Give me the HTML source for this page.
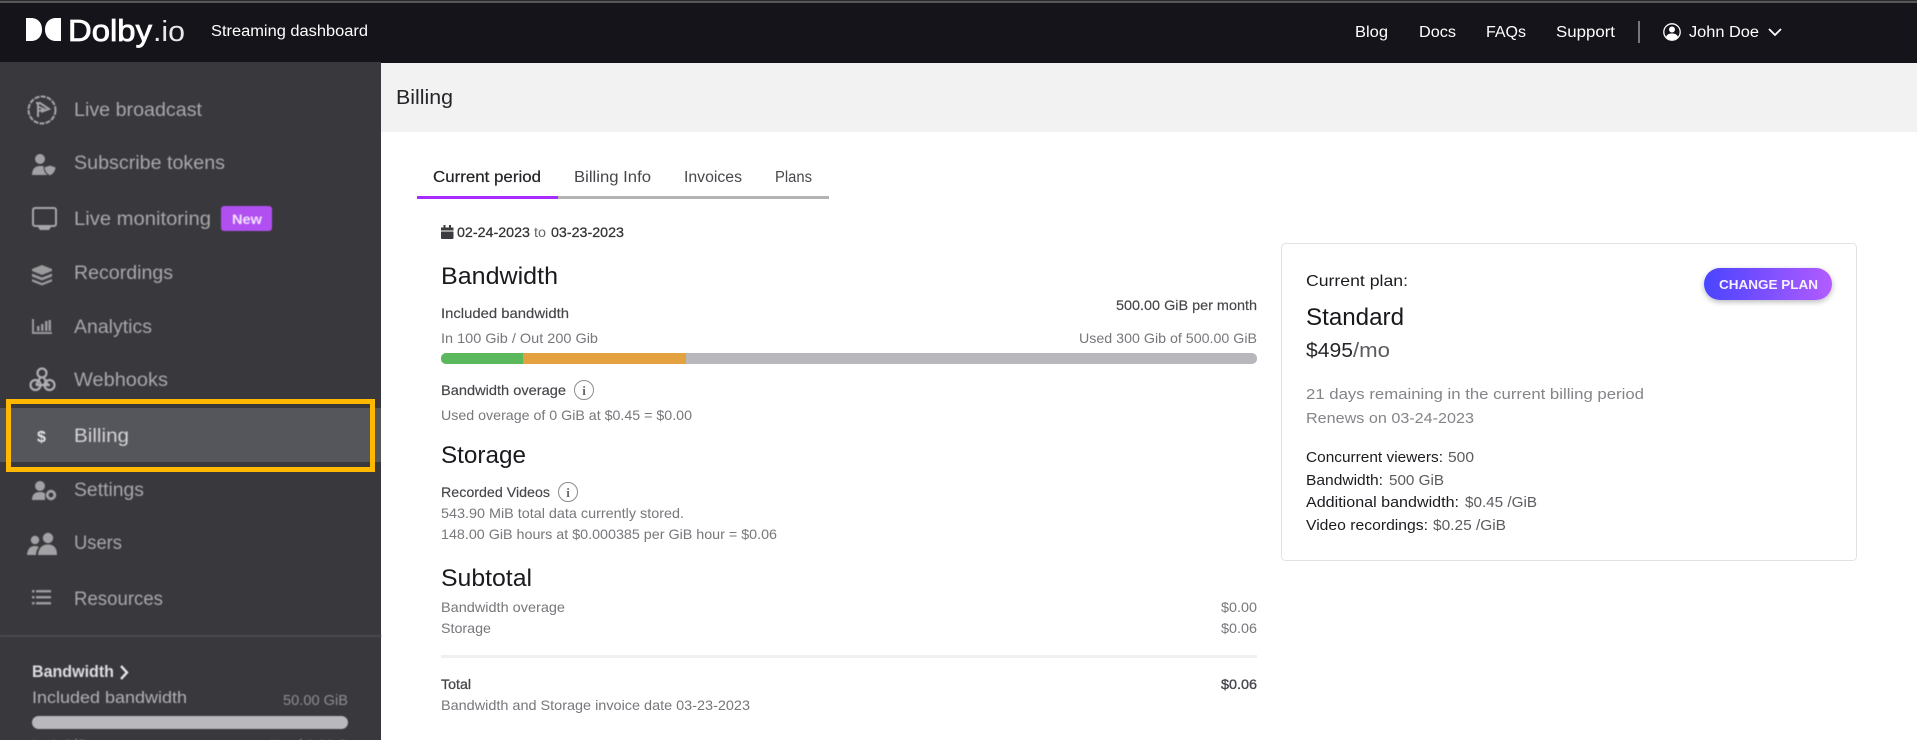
<!DOCTYPE html>
<html lang="en">
<head>
<meta charset="utf-8">
<title>Billing</title>
<style>
html,body{margin:0;padding:0;background:#fff;width:1917px;height:740px;overflow:hidden}
svg{display:block;font-family:"Liberation Sans",sans-serif}
.side text{fill:#a9a9ac;font-size:19px}
.blur{filter:blur(.45px)}
.hd{fill:#fff;font-size:15.5px}
.g{fill:#77777c;font-size:14px}
.m{fill:#45454a;font-size:14px;stroke:#45454a;stroke-width:.15}
.h{fill:#1a1a1e;font-size:24px}
.c{fill:#1c1c20;font-size:15px}
.cg{fill:#5c5c60;font-size:15px}
</style>
</head>
<body>
<svg xmlns="http://www.w3.org/2000/svg" width="1917" height="740" viewBox="0 0 1917 740">
<defs>
<linearGradient id="btn" x1="0" y1="0" x2="1" y2="0"><stop offset="0" stop-color="#4a44ff"/><stop offset="1" stop-color="#b25cff"/></linearGradient>
<filter id="sh" x="-20%" y="-40%" width="140%" height="200%"><feDropShadow dx="0" dy="2" stdDeviation="3" flood-color="#000" flood-opacity=".28"/></filter>
</defs>
<rect width="1917" height="740" fill="#fff"/>
<!-- header -->
<rect width="1917" height="63" fill="#14141a"/>
<rect width="1917" height="3" y="0" fill="#57575a"/>
<rect width="1917" height="1" y="0" fill="#2a2a2c"/>
<path d="M26 18h5c7 0 11 5 11 11.5S38 41 31 41h-5z" fill="#fff"/>
<path d="M61 18h-5c-7 0-11 5-11 11.5S49 41 56 41h5z" fill="#fff"/>
<text x="68" y="41" font-size="31" fill="#fff" stroke="#fff" stroke-width=".8" textLength="84" lengthAdjust="spacingAndGlyphs">Dolby</text>
<text x="153" y="41" font-size="29" fill="#e8e8e8" textLength="32" lengthAdjust="spacingAndGlyphs">.io</text>
<text class="hd" x="211" y="36" textLength="157" lengthAdjust="spacingAndGlyphs">Streaming dashboard</text>
<text class="hd" x="1355" y="37" textLength="33" lengthAdjust="spacingAndGlyphs">Blog</text>
<text class="hd" x="1419" y="37" textLength="37" lengthAdjust="spacingAndGlyphs">Docs</text>
<text class="hd" x="1486" y="37" textLength="40" lengthAdjust="spacingAndGlyphs">FAQs</text>
<text class="hd" x="1556" y="37" textLength="59" lengthAdjust="spacingAndGlyphs">Support</text>
<rect x="1638" y="21" width="2" height="22" fill="#77777a"/>
<circle cx="1672" cy="32" r="8.2" fill="none" stroke="#fff" stroke-width="1.3"/>
<circle cx="1672" cy="29.5" r="3" fill="#fff"/>
<path d="M1666 37c1-3 3.500-3.500 6-3.500s5 .5 6 3.500c-1.500 1.800-3.500 2.600-6 2.600s-4.500-.8-6-2.600z" fill="#fff"/>
<text class="hd" x="1689" y="37" textLength="70" lengthAdjust="spacingAndGlyphs">John Doe</text>
<path d="M1769 29l6 6 6-6" fill="none" stroke="#fff" stroke-width="1.800"/>

<!-- sidebar -->
<rect y="62" width="381" height="678" fill="#38383d"/>
<rect y="408" width="381" height="54" fill="#55565b"/>
<g class="side blur">
<text x="74" y="116" textLength="128" lengthAdjust="spacingAndGlyphs">Live broadcast</text>
<text x="74" y="169" textLength="151" lengthAdjust="spacingAndGlyphs">Subscribe tokens</text>
<text x="74" y="225" textLength="137" lengthAdjust="spacingAndGlyphs">Live monitoring</text>
<text x="74" y="279" textLength="99" lengthAdjust="spacingAndGlyphs">Recordings</text>
<text x="74" y="333" textLength="78" lengthAdjust="spacingAndGlyphs">Analytics</text>
<text x="74" y="386" textLength="94" lengthAdjust="spacingAndGlyphs">Webhooks</text>
<text x="74" y="442" textLength="55" lengthAdjust="spacingAndGlyphs" style="fill:#d4d4d6">Billing</text>
<text x="74" y="496" textLength="70" lengthAdjust="spacingAndGlyphs">Settings</text>
<text x="74" y="549" textLength="48" lengthAdjust="spacingAndGlyphs">Users</text>
<text x="74" y="605" textLength="89" lengthAdjust="spacingAndGlyphs">Resources</text>

<rect x="221" y="206" width="51" height="25" rx="3" fill="#b14ff0"/>
<text x="232" y="224" textLength="30" lengthAdjust="spacingAndGlyphs" style="fill:#f4e4ff;font-size:14px;font-weight:bold">New</text>

<!-- icons -->
<g fill="none" stroke="#a8a8ab">
<circle cx="42" cy="110" r="13.500" stroke-width="2" stroke-dasharray="5 1.200"/>
<path d="M38 102v15M36 103h4l9 6-8 3" stroke-width="2"/>
<path d="M39 107l5 2-5 2" stroke-width="1.500"/>
</g>
<g fill="#a2a2a5">
<circle cx="40" cy="159" r="5"/>
<path d="M32 175c0-6 3-9 8-9s6 1 7 2v7z"/>
<path d="M50 165l6 2c0 4-2 7-6 9-4-2-6-5-6-9z" stroke="#38383d" stroke-width="1"/>
</g>
<g>
<rect x="33" y="208" width="23" height="18" rx="2" fill="none" stroke="#a8a8ab" stroke-width="2"/>
<path d="M38 227h13l-2 3h-9z" fill="#a8a8ab"/>
</g>
<g fill="#9a9a9d">
<path d="M42 265l10 4v2l-10 4-10-4v-2z"/>
<path d="M32 273.500l10 4 10-4v3l-10 4-10-4z"/>
<path d="M32 279l10 4 10-4v2.500l-10 4-10-4z"/>
</g>
<g fill="#9a9a9d">
<path d="M32 319h2v13h18v2H32z"/>
<rect x="37" y="326" width="2.500" height="5"/><rect x="41" y="324" width="2.500" height="7"/><rect x="45" y="321" width="2.500" height="10"/><rect x="48.500" y="320" width="2.500" height="11"/>
</g>
<g fill="none" stroke="#b0b0b3" stroke-width="2.200">
<circle cx="42" cy="373" r="4.500"/>
<circle cx="35.500" cy="385" r="5"/>
<circle cx="49.500" cy="385" r="5"/>
<path d="M40 378l-4 7M44 378l4 7M36 385h14"/>
</g>
<text x="41.500" y="442" text-anchor="middle" style="fill:#e4e4e6;font-size:16px;font-weight:bold">$</text>
<g fill="#a2a2a5">
<circle cx="40" cy="486" r="5"/>
<path d="M32 500c0-6 3-8 8-8 2.500 0 4 .5 5 1.500V500z"/>
<circle cx="51" cy="495" r="3.800" fill="#38383d" stroke="#a2a2a5" stroke-width="2.800"/>
</g>
<g fill="#a2a2a5">
<circle cx="35" cy="540" r="4.200"/>
<circle cx="48" cy="538" r="5.200"/>
<path d="M27 555c.5-6 3-9 8-9 1.500 0 3 .4 4 1-2 2-3 5-3 8z"/>
<path d="M38 555c.5-7 4-10.500 10-10.500S57 548 57 555z"/>
</g>
<g fill="#9a9a9d">
<rect x="32" y="590" width="2.500" height="2.500"/><rect x="36" y="590" width="15" height="2.500"/>
<rect x="32" y="596" width="2.500" height="2.500"/><rect x="36" y="596" width="15" height="2.500"/>
<rect x="32" y="602" width="2.500" height="2.500"/><rect x="36" y="602" width="15" height="2.500"/>
</g>

<rect y="635" width="381" height="2" fill="#4b4b50"/>
<text x="32" y="677" textLength="82" lengthAdjust="spacingAndGlyphs" style="fill:#dedee0;font-size:17px;font-weight:bold">Bandwidth</text>
<path d="M121 666l6 6.500-6 6.500" fill="none" stroke="#e4e4e6" stroke-width="2.400"/>
<text x="32" y="703" textLength="155" lengthAdjust="spacingAndGlyphs" style="fill:#b2b2b5;font-size:16.500px">Included bandwidth</text>
<text x="283" y="705" textLength="65" lengthAdjust="spacingAndGlyphs" style="fill:#8e8e92;font-size:14.500px">50.00 GiB</text>
<rect x="32" y="716" width="316" height="13" rx="6.500" fill="#b8b8bd"/>
<text x="32" y="750" textLength="56" lengthAdjust="spacingAndGlyphs" style="fill:#a2a2a5;font-size:15px">In 0 GiB</text>
<text x="270" y="750" textLength="78" lengthAdjust="spacingAndGlyphs" style="fill:#a2a2a5;font-size:15px">Used 0.00 G</text>
</g>
<rect x="8.500" y="401.500" width="364" height="68" fill="none" stroke="#ffb800" stroke-width="5"/>

<!-- title band -->
<rect x="381" y="63" width="1536" height="69" fill="#f2f2f2"/>
<text x="396" y="104" font-size="20" fill="#26262a" textLength="57" lengthAdjust="spacingAndGlyphs">Billing</text>

<!-- tabs -->
<text x="433" y="182" font-size="16" fill="#232327" stroke="#232327" stroke-width=".2" textLength="108" lengthAdjust="spacingAndGlyphs">Current period</text>
<text x="574" y="182" font-size="15.500" fill="#47474c" textLength="77" lengthAdjust="spacingAndGlyphs">Billing Info</text>
<text x="684" y="182" font-size="15.500" fill="#47474c" textLength="58" lengthAdjust="spacingAndGlyphs">Invoices</text>
<text x="775" y="182" font-size="15.500" fill="#47474c" textLength="37" lengthAdjust="spacingAndGlyphs">Plans</text>
<rect x="558" y="196" width="271" height="3" fill="#b3b3b3"/>
<rect x="417" y="196" width="141" height="3" fill="#a92cff"/>

<!-- date -->
<path d="M441 227.500h12.500v3H441zM441 231.500h12.500V238a1 1 0 0 1-1 1H442a1 1 0 0 1-1-1z" fill="#3c3c40"/>
<rect x="443.500" y="225" width="2" height="3" fill="#3c3c40"/><rect x="449" y="225" width="2" height="3" fill="#3c3c40"/>
<text x="457" y="237" font-size="14" fill="#333" stroke="#333" stroke-width=".25" textLength="73" lengthAdjust="spacingAndGlyphs">02-24-2023</text>
<text x="534" y="237" font-size="14" fill="#666" textLength="12" lengthAdjust="spacingAndGlyphs">to</text>
<text x="551" y="237" font-size="14" fill="#333" stroke="#333" stroke-width=".25" textLength="73" lengthAdjust="spacingAndGlyphs">03-23-2023</text>

<!-- bandwidth -->
<text class="h" x="441" y="284" textLength="117" lengthAdjust="spacingAndGlyphs">Bandwidth</text>
<text class="m" x="441" y="318" textLength="128" lengthAdjust="spacingAndGlyphs">Included bandwidth</text>
<text class="m" x="1116" y="310" textLength="141" lengthAdjust="spacingAndGlyphs">500.00 GiB per month</text>
<text class="g" x="441" y="343" textLength="157" lengthAdjust="spacingAndGlyphs">In 100 Gib / Out 200 Gib</text>
<text class="g" x="1079" y="343" textLength="178" lengthAdjust="spacingAndGlyphs">Used 300 Gib of 500.00 GiB</text>
<rect x="441" y="353" width="816" height="11" rx="5" fill="#b8b7bc"/>
<path d="M446 353h77v11h-77a5 5 0 0 1-5-5v-1a5 5 0 0 1 5-5z" fill="#5cb85c"/>
<rect x="523" y="353" width="163" height="11" fill="#e4a13f"/>
<text class="m" x="441" y="395" textLength="125" lengthAdjust="spacingAndGlyphs">Bandwidth overage</text>
<circle cx="584" cy="390" r="9.500" fill="none" stroke="#8c8c8c" stroke-width="1"/>
<text x="584" y="395" text-anchor="middle" font-size="13" font-family="Liberation Serif" font-weight="bold" fill="#6a6a6a">i</text>
<text class="g" x="441" y="420" textLength="251" lengthAdjust="spacingAndGlyphs">Used overage of 0 GiB at $0.45 = $0.00</text>

<!-- storage -->
<text class="h" x="441" y="463" textLength="85" lengthAdjust="spacingAndGlyphs">Storage</text>
<text class="m" x="441" y="497" textLength="109" lengthAdjust="spacingAndGlyphs">Recorded Videos</text>
<circle cx="568" cy="492" r="9.500" fill="none" stroke="#8c8c8c" stroke-width="1"/>
<text x="568" y="497" text-anchor="middle" font-size="13" font-family="Liberation Serif" font-weight="bold" fill="#6a6a6a">i</text>
<text class="g" x="441" y="518" textLength="243" lengthAdjust="spacingAndGlyphs">543.90 MiB total data currently stored.</text>
<text class="g" x="441" y="539" textLength="336" lengthAdjust="spacingAndGlyphs">148.00 GiB hours at $0.000385 per GiB hour = $0.06</text>

<!-- subtotal -->
<text class="h" x="441" y="586" textLength="91" lengthAdjust="spacingAndGlyphs">Subtotal</text>
<text class="g" x="441" y="612" textLength="124" lengthAdjust="spacingAndGlyphs">Bandwidth overage</text>
<text class="g" x="441" y="633" textLength="50" lengthAdjust="spacingAndGlyphs">Storage</text>
<text class="g" x="1221" y="612" textLength="36" lengthAdjust="spacingAndGlyphs">$0.00</text>
<text class="g" x="1221" y="633" textLength="36" lengthAdjust="spacingAndGlyphs">$0.06</text>
<rect x="441" y="655" width="816" height="3" fill="#f0f0f0"/>
<text class="m" x="441" y="689" textLength="30" lengthAdjust="spacingAndGlyphs" style="stroke-width:.3">Total</text>
<text class="m" x="1221" y="689" textLength="36" lengthAdjust="spacingAndGlyphs" style="stroke-width:.35">$0.06</text>
<text class="g" x="441" y="710" textLength="309" lengthAdjust="spacingAndGlyphs">Bandwidth and Storage invoice date 03-23-2023</text>

<!-- card -->
<rect x="1281.500" y="243.500" width="575" height="317" rx="4" fill="#fff" stroke="#e2e2e2"/>
<text x="1306" y="286" font-size="16" fill="#1c1c20" textLength="102" lengthAdjust="spacingAndGlyphs">Current plan:</text>
<rect x="1704" y="268" width="128" height="32" rx="16" fill="url(#btn)" filter="url(#sh)"/>
<text x="1719" y="289" font-size="13" font-weight="bold" fill="#f4f0ff" textLength="99" lengthAdjust="spacingAndGlyphs">CHANGE PLAN</text>
<text x="1306" y="325" font-size="24" fill="#18181c" textLength="98" lengthAdjust="spacingAndGlyphs">Standard</text>
<text x="1306" y="357" font-size="20" fill="#26262a" textLength="47" lengthAdjust="spacingAndGlyphs">$495</text>
<text x="1353" y="357" font-size="20" fill="#5c5c60" textLength="37" lengthAdjust="spacingAndGlyphs">/mo</text>
<text x="1306" y="399" font-size="15" fill="#858589" textLength="338" lengthAdjust="spacingAndGlyphs">21 days remaining in the current billing period</text>
<text x="1306" y="423" font-size="15" fill="#858589" textLength="168" lengthAdjust="spacingAndGlyphs">Renews on 03-24-2023</text>
<text class="c" x="1306" y="462" textLength="137" lengthAdjust="spacingAndGlyphs">Concurrent viewers:</text>
<text class="cg" x="1448" y="462" textLength="26" lengthAdjust="spacingAndGlyphs">500</text>
<text class="c" x="1306" y="485" textLength="77" lengthAdjust="spacingAndGlyphs">Bandwidth:</text>
<text class="cg" x="1389" y="485" textLength="55" lengthAdjust="spacingAndGlyphs">500 GiB</text>
<text class="c" x="1306" y="507" textLength="153" lengthAdjust="spacingAndGlyphs">Additional bandwidth:</text>
<text class="cg" x="1465" y="507" textLength="72" lengthAdjust="spacingAndGlyphs">$0.45 /GiB</text>
<text class="c" x="1306" y="530" textLength="122" lengthAdjust="spacingAndGlyphs">Video recordings:</text>
<text class="cg" x="1433" y="530" textLength="73" lengthAdjust="spacingAndGlyphs">$0.25 /GiB</text>
</svg>
</body>
</html>
